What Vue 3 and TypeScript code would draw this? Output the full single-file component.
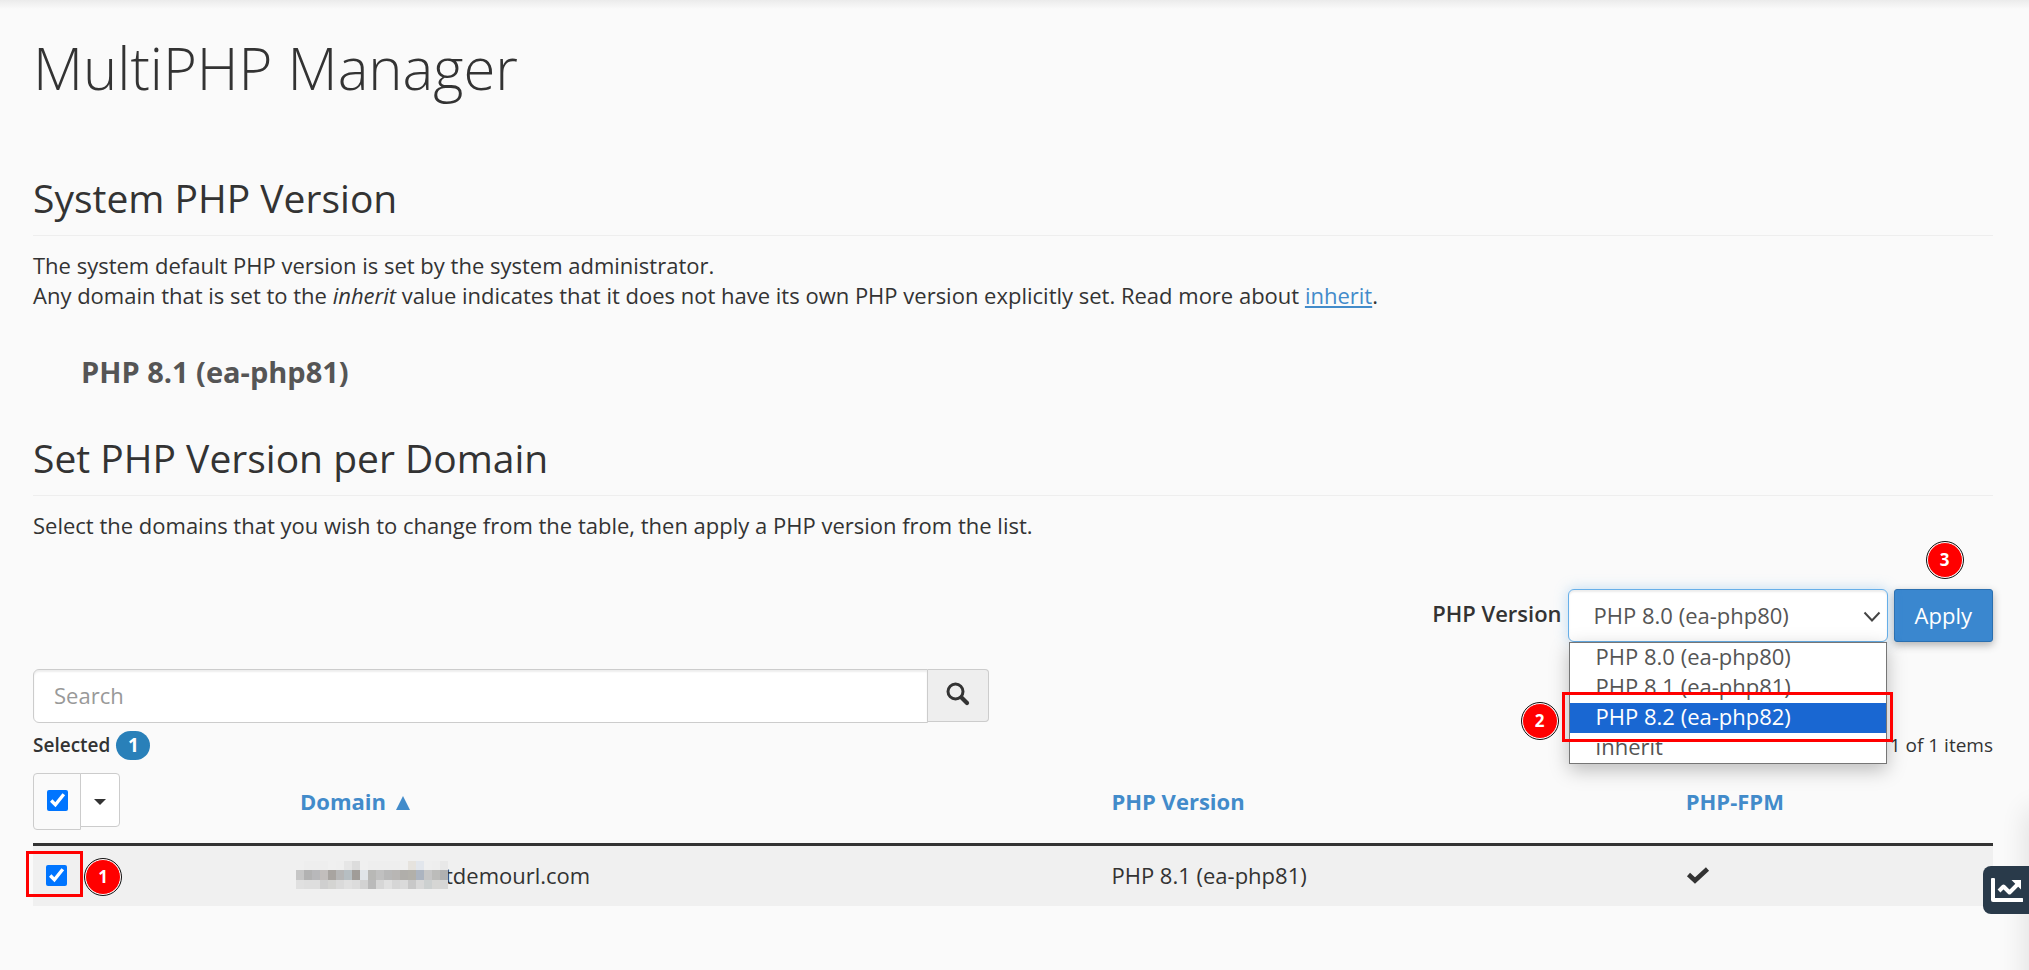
<script setup lang="ts">
import { ref } from 'vue'

interface DomainRow {
  domain: string
  version: string
  fpm: boolean
  selected: boolean
}

const versions: string[] = ['PHP 8.0 (ea-php80)', 'PHP 8.1 (ea-php81)', 'PHP 8.2 (ea-php82)', 'inherit']
const current = ref<string>(versions[0])
const highlighted = ref<string>(versions[2])
const query = ref<string>('')
const allSelected = ref<boolean>(true)
const rows = ref<DomainRow[]>([
  { domain: 'tdemourl.com', version: 'PHP 8.1 (ea-php81)', fpm: true, selected: true },
])

// Shades of the pixelated block that hides the subdomain, row by row.
const mask: string[][] = [
  ['#f0f0f0', '#eeeeee', '#eeeeee', '#eeeeee', '#f0f0f0', '#efefef', '#e6e6e6', '#dcdcdc', '#f0f0f0', '#eeeeee', '#eeeeee', '#eeeeee', '#eeeeee', '#efefef', '#e6e3de', '#e2e6ec', '#efefef', '#eeeeee', '#e8e8e8'],
  ['#c6c6c6', '#b2b2b2', '#b8b8ba', '#c2bebc', '#a8a4a0', '#b6b6b6', '#b6bec2', '#a09c98', '#e0e4e8', '#b8b8b6', '#c0c0c0', '#b8b8b8', '#b8b6b4', '#b0aeaa', '#b2b0aa', '#acb4c0', '#c6c6c6', '#bcbcba', '#b0b0b0'],
  ['#e0e0e0', '#dedede', '#dedede', '#cfcfcf', '#d4d4d2', '#dadada', '#e0e0e0', '#dcdcdc', '#d2d2d2', '#bababa', '#d6d6d6', '#e0e0e0', '#d6d6d6', '#dadada', '#c8c8c8', '#d8d8d8', '#ccd0d0', '#d6d6d4', '#d6d6d6'],
]
</script>

<template>
  <main class="page">
    <h1>MultiPHP Manager</h1>

    <section>
      <h2>System PHP Version</h2>
      <p>
        The system default PHP version is set by the system administrator.<br />
        Any domain that is set to the <em>inherit</em> value indicates that it does not have its own PHP version
        explicitly set. Read more about <a href="#inherit">inherit</a>.
      </p>
      <div class="system-version">PHP 8.1 (ea-php81)</div>
    </section>

    <section>
      <h2>Set PHP Version per Domain</h2>
      <p>Select the domains that you wish to change from the table, then apply a PHP version from the list.</p>

      <div class="apply-row">
        <label for="version">PHP Version</label>
        <div class="select-wrap">
          <select id="version" v-model="current">
            <option v-for="v in versions" :key="v" :value="v">{{ v }}</option>
          </select>
          <svg class="chevron" viewBox="0 0 18 12" aria-hidden="true">
            <path d="M1.5 1.5 9 9.5l7.500-8" fill="none" stroke="#444" stroke-width="2" />
          </svg>
          <ul class="options" role="listbox" aria-label="PHP Version">
            <li
              v-for="v in versions"
              :key="v"
              role="option"
              :aria-selected="v === highlighted"
              :class="{ active: v === highlighted }"
            >{{ v }}</li>
          </ul>
          <span class="frame frame-option"></span>
          <span class="marker marker-option">2</span>
        </div>
        <div class="apply-wrap">
          <button type="button" class="apply">Apply</button>
          <span class="marker marker-apply">3</span>
        </div>
      </div>

      <div class="columns">
        <div class="search">
          <input v-model="query" type="text" placeholder="Search" aria-label="Search" />
          <button type="button" aria-label="Search">
            <svg viewBox="0 0 24 24" aria-hidden="true">
              <circle cx="9.500" cy="9.500" r="7.500" fill="none" stroke="#333" stroke-width="3" />
              <path d="m15.500 15.500 5.500 5.500" stroke="#333" stroke-width="4.200" stroke-linecap="round" />
            </svg>
          </button>
        </div>
      </div>

      <div class="summary">
        <span class="selected">Selected <span class="count">1</span></span>
        <span>1 of 1 items</span>
      </div>

      <table>
        <colgroup>
          <col class="c-check" />
          <col class="c-domain" />
          <col class="c-version" />
          <col class="c-fpm" />
        </colgroup>
        <thead>
          <tr>
            <th>
              <div class="check-group">
                <label class="check-box">
                  <input v-model="allSelected" type="checkbox" aria-label="Select all domains" />
                </label>
                <button type="button" class="caret" aria-label="Selection options">
                  <svg viewBox="0 0 12 6" aria-hidden="true"><path d="M0 0h12L6 6z" fill="#333" /></svg>
                </button>
              </div>
            </th>
            <th><a href="#domain">Domain <svg class="sort" viewBox="0 0 14 14" aria-hidden="true"><path d="M7 0l7 14H0z" fill="#428bca" /></svg></a></th>
            <th><a href="#version">PHP Version</a></th>
            <th><a href="#fpm">PHP-FPM</a></th>
          </tr>
        </thead>
        <tbody>
          <tr v-for="row in rows" :key="row.domain">
            <td class="row-check">
              <input v-model="row.selected" type="checkbox" :aria-label="'Select ' + row.domain" />
              <span class="frame frame-check"></span>
              <span class="marker marker-check">1</span>
            </td>
            <td>
              <div class="domain">
                <svg class="mask" viewBox="0 0 153 28" aria-hidden="true" shape-rendering="crispEdges">
                  <g v-for="(line, y) in mask" :key="y">
                    <rect
                      v-for="(shade, x) in line"
                      :key="x"
                      :x="x * 8"
                      :y="y === 0 ? 0 : y * 10 - 1"
                      width="8"
                      height="10"
                      :fill="shade"
                    />
                  </g>
                </svg>
                <span>{{ row.domain }}</span>
              </div>
            </td>
            <td>{{ row.version }}</td>
            <td>
              <svg v-if="row.fpm" class="tick" viewBox="0 0 24 18" role="img" aria-label="Enabled">
                <path d="M2.500 8.500 9 14.500 21.500 3" fill="none" stroke="#333" stroke-width="4.600" />
              </svg>
            </td>
          </tr>
        </tbody>
      </table>
    </section>

    <div class="side-shadow"></div>
    <button type="button" class="stats" aria-label="Statistics">
      <svg viewBox="0 0 32 24" aria-hidden="true">
        <path d="M2 1.500V22h29" fill="none" stroke="#fff" stroke-width="4" stroke-linejoin="round" stroke-linecap="round" />
        <path d="m8 13 4.500-4.500 6 6L27 6" fill="none" stroke="#fff" stroke-width="4" stroke-linejoin="round" />
        <path d="M20.500 2H30v9.500z" fill="#fff" />
      </svg>
    </button>
  </main>
</template>

<style>
html,
body {
  margin: 0;
  background: #fafafa;
}
</style>

<style scoped>
* {
  box-sizing: border-box;
}

.page {
  position: relative;
  min-height: 100vh;
  overflow: hidden;
  padding: 28px 36px 0 33px;
  background: linear-gradient(#ebebeb, #fafafa 9px);
  color: #333;
  font: 22px/30px 'Open Sans', sans-serif;
}

h1 {
  margin: 0 0 68px;
  font-size: 58px;
  font-weight: 300;
  line-height: 80px;
}

h2 {
  margin: 0 0 14px;
  padding-bottom: 16px;
  border-bottom: 1px solid #eee;
  font-size: 39px;
  font-weight: 500;
  line-height: 43px;
}

p {
  margin: 0;
}

a {
  color: #428bca;
}

.system-version {
  margin: 42px 0 44px;
  padding-left: 48px;
  color: #555;
  font-size: 29px;
  font-weight: 700;
  line-height: 40px;
}

.apply-row {
  display: flex;
  justify-content: flex-end;
  align-items: center;
  gap: 6px;
  margin: 49px 0 27px;
}

.apply-row label {
  margin-bottom: 6px;
  font-weight: 600;
}

.select-wrap,
.apply-wrap {
  position: relative;
}

.select-wrap {
  z-index: 2;
  width: 320px;
}

select {
  display: block;
  width: 100%;
  height: 53px;
  padding: 0 25px 2px;
  appearance: none;
  border: 1px solid #66afe9;
  border-radius: 6px;
  outline: none;
  background: #fff;
  box-shadow: inset 0 2px 2px rgba(0, 0, 0, 0.08), 0 0 14px rgba(102, 175, 233, 0.4);
  color: #555;
  font: inherit;
}

.chevron {
  position: absolute;
  top: 22px;
  right: 7px;
  width: 18px;
  height: 12px;
}

.options {
  position: absolute;
  top: 53px;
  left: 1px;
  right: 1px;
  margin: 0;
  padding: 0;
  border: 1px solid #767676;
  background: #fff;
  box-shadow: 0 6px 18px rgba(0, 0, 0, 0.25);
  color: #555;
  list-style: none;
}

.options li {
  padding: 0 0 4px 26px;
  line-height: 26px;
}

.options .active {
  background: #1967d2;
  color: #fff;
}

.apply {
  display: block;
  height: 53px;
  padding: 0 20px 2px;
  border: 1px solid #2a6fb0;
  border-radius: 3px;
  background: #3a87cf;
  box-shadow: 0 3px 8px rgba(0, 0, 0, 0.3);
  color: #fff;
  font: inherit;
}

.frame {
  position: absolute;
  border: 3px solid #f00;
}

.frame-option {
  top: 103px;
  left: -6px;
  right: -5px;
  height: 50px;
}

.frame-check {
  top: 5px;
  left: -7px;
  width: 57px;
  height: 46px;
}

.marker {
  position: absolute;
  display: flex;
  justify-content: center;
  align-items: center;
  width: 36px;
  height: 36px;
  border: 1px solid #fff;
  border-radius: 50%;
  outline: 1px solid #111;
  background: #f00;
  color: #fff;
  font-size: 17px;
  font-weight: 700;
}

.marker-option {
  top: 114px;
  left: -46px;
}

.marker-apply {
  top: -47px;
  left: 33px;
}

.marker-check {
  top: 13px;
  left: 52px;
}

.columns {
  display: grid;
  grid-template-columns: 1fr 1fr;
  gap: 48px;
}

.search {
  display: flex;
  align-items: flex-start;
}

.search input {
  flex: 1;
  min-width: 0;
  height: 54px;
  padding: 0 20px 2px;
  border: 1px solid #ccc;
  border-radius: 6px 0 0 6px;
  background: #fff;
  box-shadow: inset 0 2px 2px rgba(0, 0, 0, 0.07);
  color: #555;
  font: inherit;
}

.search input::placeholder {
  color: #999;
}

.search button {
  display: grid;
  place-items: center;
  width: 61px;
  height: 53px;
  padding: 0 0 4px;
  border: 1px solid #ccc;
  border-left: 0;
  border-radius: 0 4px 4px 0;
  background: #eee;
}

.search button svg {
  width: 24px;
  height: 24px;
}

.summary {
  display: flex;
  justify-content: space-between;
  align-items: center;
  height: 36px;
  padding-top: 8px;
  font-size: 19px;
  line-height: 28px;
}

.selected {
  display: flex;
  align-items: center;
  gap: 6px;
  font-weight: 600;
}

.count {
  display: grid;
  place-items: center;
  width: 34px;
  height: 29px;
  border-radius: 15px;
  background: #2980b9;
  color: #fff;
  font-weight: 700;
}

table {
  width: 100%;
  border-collapse: separate;
  border-spacing: 0;
  table-layout: fixed;
}

.c-check {
  width: 253px;
}

.c-domain {
  width: 41.400%;
}

.c-version {
  width: 29.300%;
}

th,
td {
  padding: 14px;
  text-align: left;
  vertical-align: middle;
}

th:first-child,
td:first-child {
  padding-left: 0;
}

th {
  padding-bottom: 13px;
  border-bottom: 3px solid #333;
}

th a {
  display: block;
  padding-bottom: 2px;
  text-decoration: none;
}

td {
  height: 60px;
  padding: 13px 14px 15px;
  background: #f0f0f0;
}

.sort {
  width: 14px;
  height: 14px;
  margin-left: 4px;
}

.check-group {
  display: flex;
  align-items: flex-start;
}

.check-box {
  display: grid;
  place-items: center;
  width: 48px;
  height: 57px;
  padding: 0 0 2px;
  border: 1px solid #ccc;
  border-radius: 4px 0 0 4px;
}

input[type='checkbox'] {
  display: block;
  width: 21px;
  height: 21px;
  margin: 0;
  accent-color: #0075ff;
}

.caret {
  display: grid;
  place-items: center;
  width: 40px;
  height: 54px;
  margin-left: -1px;
  padding: 4px 0 0;
  border: 1px solid #ccc;
  border-radius: 0 4px 4px 0;
  background: #fff;
}

.caret svg {
  width: 12px;
  height: 6px;
}

.row-check {
  position: relative;
}

.row-check input {
  margin-left: 13px;
}

.domain {
  display: flex;
  align-items: center;
  margin-left: -4px;
}

.mask {
  z-index: 1;
  width: 153px;
  height: 28px;
  margin-right: -4px;
}

.tick {
  display: block;
  width: 24px;
  height: 18px;
}

.side-shadow {
  position: absolute;
  top: 810px;
  right: -20px;
  bottom: -40px;
  width: 20px;
  box-shadow: 0 0 28px rgba(0, 0, 0, 0.14);
}

.stats {
  position: absolute;
  top: 866px;
  right: 0;
  width: 46px;
  height: 48px;
  padding: 0 0 0 8px;
  border: 0;
  border-radius: 8px 0 0 8px;
  background: #293a4a;
}

.stats svg {
  display: block;
  width: 32px;
  height: 24px;
}
</style>
